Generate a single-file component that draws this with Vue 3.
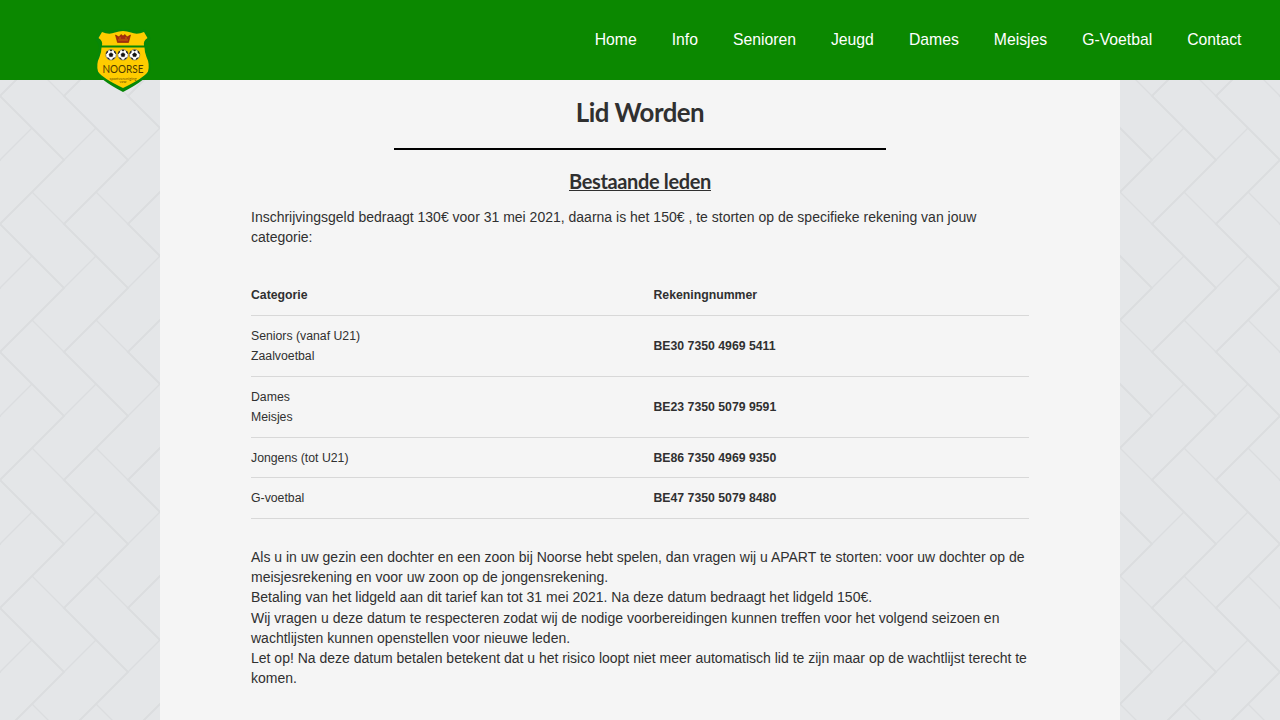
<script setup>
const links = ['Home', 'Info', 'Senioren', 'Jeugd', 'Dames', 'Meisjes', 'G-Voetbal', 'Contact']
const rows = [
  { names: ['Seniors (vanaf U21)', 'Zaalvoetbal'], account: 'BE30 7350 4969 5411' },
  { names: ['Dames', 'Meisjes'], account: 'BE23 7350 5079 9591' },
  { names: ['Jongens (tot U21)'], account: 'BE86 7350 4969 9350' },
  { names: ['G-voetbal'], account: 'BE47 7350 5079 8480' },
]
const balls = [16, 28, 39.6]
</script>

<template>
  <div class="page">
    <svg class="pavement" width="1280" height="720" aria-hidden="true">
      <defs>
        <pattern id="bricks" width="64" height="128" y="96" patternUnits="userSpaceOnUse">
          <g fill="none" stroke="#dbdddf">
            <path stroke-width="2" d="M-2 -2L64 64L-2 130M62 -2L66 2M66 126L62 130M-4 60L0 64L-4 68" />
            <path stroke-width="1.4" d="M32 32L0 64M32 96L64 128" />
          </g>
        </pattern>
      </defs>
      <rect width="1280" height="720" fill="url(#bricks)" />
    </svg>

    <header class="bar">
      <svg class="logo" width="56" height="66" viewBox="0 0 56 66" aria-label="Noorse">
        <path d="M6 1Q13 5 20 2Q28 0 36 2Q43 5 50 1L56 11Q50 17 53 25Q57 34 55 43Q53 51 28 64Q3 51 1 43Q-1 34 3 25Q6 17 0 11Z" fill="#078708" />
        <path d="M7 4Q14 7 20 4.500Q28 1.500 36 4.500Q42 7 49 4L52.500 10Q48 13 49 17.400H7Q8 13 3.500 10Z" fill="#fc0" />
        <path d="M6.500 19.500H49.500Q49.500 24 51.500 29Q55 36 53 43.500Q49 50 28 60Q7 50 3 43.500Q1 36 4.500 29Q6.500 24 6.500 19.500Z" fill="#fc0" />
        <path d="M20.500 7L24 9L26 6.500L28 8L30 6.500L32 9L35.500 7L33.500 14.500H22.500Z" fill="#a52c12" stroke="#852000" stroke-width=".6" />
        <path d="M23 12H33M24 10H26M30 10H32" stroke="#d88900" stroke-width=".7" />
        <g v-for="x in balls" :key="x" :transform="`translate(${x} 26.800)`">
          <circle r="5.2" fill="#fff" stroke="#555" stroke-width=".6" />
          <path d="M-2 -.6L0 -2.1L2 -.6L1.3 1.8H-1.3ZM-4.7 -1L-3 -3L-4 -3.5ZM4.7 -1L3 -3L4 -3.5ZM-3.7 3L-2 3.5L-1.6 4.7ZM3.7 3L2 3.5L1.6 4.7ZM-1 -4.7H1L0 -3.6Z" fill="#111" stroke="#111" stroke-width=".6" />
        </g>
        <text x="28" y="44.800" text-anchor="middle" textLength="41" lengthAdjust="spacingAndGlyphs" class="club">NOORSE</text>
        <text x="28" y="51.700" text-anchor="middle" textLength="27" lengthAdjust="spacingAndGlyphs" class="small">sportvereniging</text>
        <text x="28" y="55" text-anchor="middle" textLength="7" lengthAdjust="spacingAndGlyphs" class="small">vzw</text>
      </svg>
      <nav>
        <a v-for="link in links" :key="link">{{ link }}</a>
      </nav>
    </header>

    <main>
      <h1>Lid Worden</h1>
      <div class="rule"></div>
      <h2><span>Bestaande leden</span></h2>
      <p class="intro">Inschrijvingsgeld bedraagt 130€ voor 31 mei 2021, daarna is het 150€ , te storten op de specifieke rekening van jouw<br>categorie:</p>
      <table>
        <thead>
          <tr><th>Categorie</th><th>Rekeningnummer</th></tr>
        </thead>
        <tbody>
          <tr v-for="row in rows" :key="row.account">
            <td><div v-for="name in row.names" :key="name">{{ name }}</div></td>
            <td><b>{{ row.account }}</b></td>
          </tr>
        </tbody>
      </table>
      <p class="notes">Als u in uw gezin een dochter en een zoon bij Noorse hebt spelen, dan vragen wij u APART te storten: voor uw dochter op de<br>meisjesrekening en voor uw zoon op de jongensrekening.<br>Betaling van het lidgeld aan dit tarief kan tot 31 mei 2021. Na deze datum bedraagt het lidgeld 150€.<br>Wij vragen u deze datum te respecteren zodat wij de nodige voorbereidingen kunnen treffen voor het volgend seizoen en<br>wachtlijsten kunnen openstellen voor nieuwe leden.<br>Let op! Na deze datum betalen betekent dat u het risico loopt niet meer automatisch lid te zijn maar op de wachtlijst terecht te<br>komen.</p>
    </main>
  </div>
</template>

<style>
html, body { margin: 0; overflow: hidden; }
</style>

<style scoped>
.page {
  position: relative;
  width: 1280px;
  height: 720px;
  overflow: hidden;
  background: #e4e6e8;
  color: #303030;
  font-family: "Liberation Sans", Arial, sans-serif;
  font-size: 14px;
  line-height: 20.2px;
}
.pavement { position: absolute; inset: 0; }
.bar {
  position: relative;
  z-index: 2;
  box-sizing: border-box;
  height: 80px;
  display: flex;
  justify-content: space-between;
  padding: 0 38.5px 0 95px;
  background: #0b8800;
}
.logo { margin-top: 28px; overflow: visible; }
.club { font: 12.3px Lato, sans-serif; fill: #4d3b00; }
.small { font: 4px Lato, sans-serif; fill: #665000; }
nav {
  display: flex;
  gap: 35px;
  color: #fff;
  font-size: 15.75px;
  line-height: 80px;
}
main {
  position: relative;
  box-sizing: border-box;
  width: 960px;
  height: 640px;
  margin: 0 auto;
  padding: 17px 91px 0;
  background: #f5f5f5;
}
h1, h2 {
  margin: 0;
  font-family: Lato, sans-serif;
  font-weight: 700;
  text-align: center;
}
h1 { font-size: 25.8px; line-height: 30px; letter-spacing: -.5px; }
.rule { width: 492px; height: 2px; margin: 21px auto 0; background: #000; }
h2 {
  margin-top: 18px;
  font-size: 20px;
  line-height: 26px;
  letter-spacing: -.37px;
}
h2 span {
  display: inline-block;
  height: 22px;
  border-bottom: 1px solid #303030;
  line-height: 26px;
}
p { margin: 0; white-space: nowrap; }
.intro { margin-top: 13px; }
table {
  width: 778px;
  margin-top: 28px;
  border-collapse: separate;
  border-spacing: 0;
  table-layout: fixed;
  font-size: 12.28px;
}
tr { height: 41px; }
tbody tr:nth-child(-n + 2) { height: 61px; }
tbody tr:nth-child(3) { height: 40px; }
th, td {
  padding: 0;
  border-bottom: 1px solid #d8d8d8;
  text-align: left;
  vertical-align: middle;
}
th:first-child { width: 402.5px; }
.notes { margin-top: 27.5px; }
</style>
